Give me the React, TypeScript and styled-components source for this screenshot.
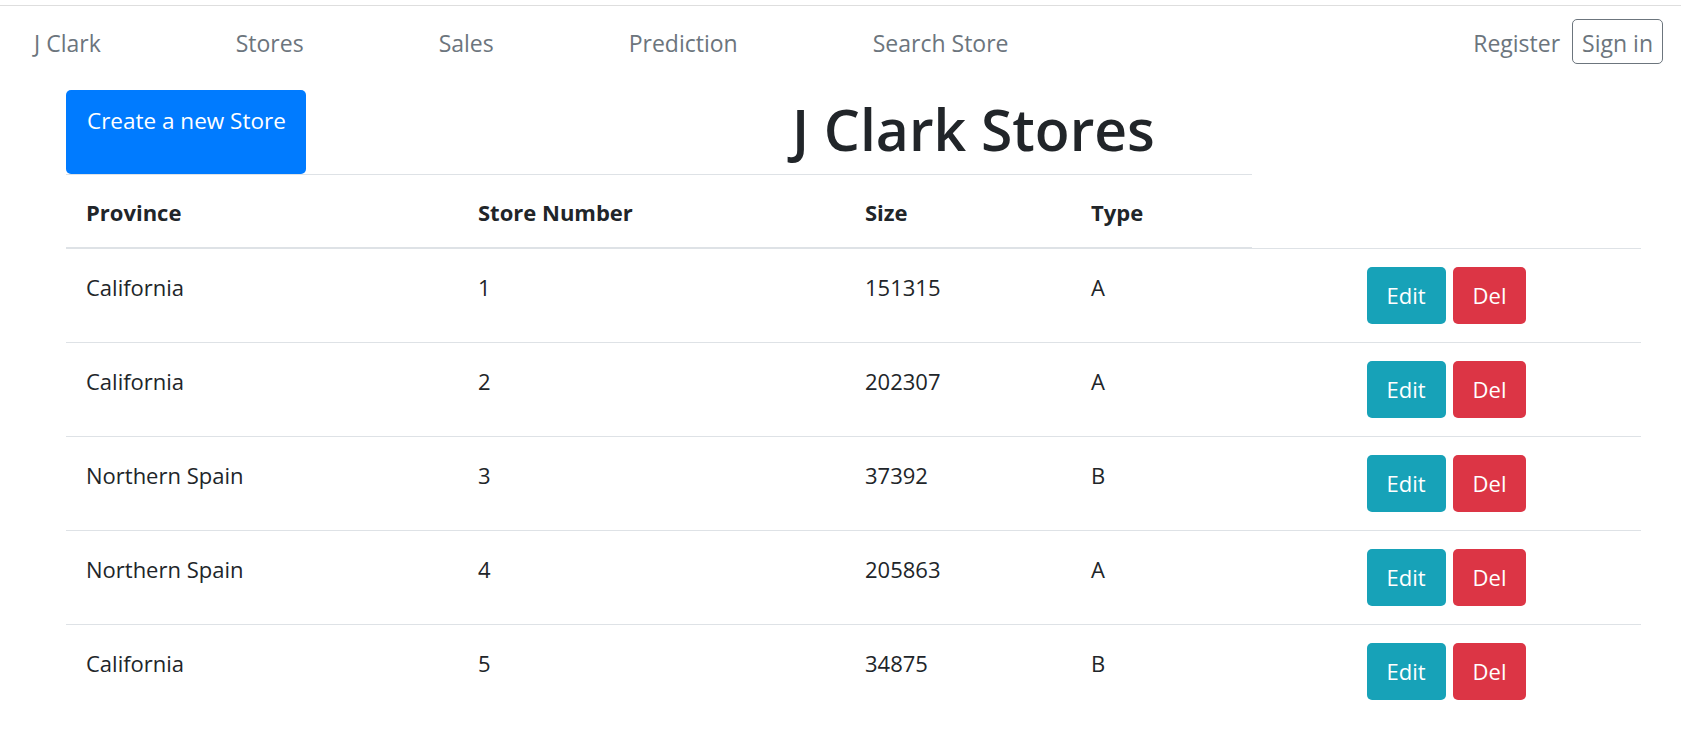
import React from 'react';
import styled, { createGlobalStyle } from 'styled-components';

const GlobalStyle = createGlobalStyle`
  body {
    margin: 0;
    padding-top: 5px;
    background: #fff;
    font-family: "Open Sans", "Noto Sans", sans-serif;
    color: #212529;
  }
  * {
    box-sizing: border-box;
  }
`;

const NavBar = styled.nav`
  display: flex;
  align-items: baseline;
  border-top: 1px solid #dedede;
  padding: 13px 18px 0 34px;
`;

const NavLinks = styled.div`
  display: flex;
  align-items: baseline;
  gap: 135px;
`;

const NavLink = styled.a`
  font-size: 23px;
  line-height: 33px;
  color: #6c757d;
  text-decoration: none;
  cursor: pointer;
`;

const NavRight = styled.div`
  display: flex;
  align-items: baseline;
  gap: 12px;
  margin-left: auto;
`;

const SignInButton = styled.button`
  font-family: inherit;
  font-size: 23px;
  line-height: 33px;
  padding: 7px 9px 3px;
  color: #6c757d;
  background: transparent;
  border: 1px solid #6c757d;
  border-radius: 5px;
  cursor: pointer;
`;

const Main = styled.main`
  padding: 26px 40px 0 66px;
`;

const HeaderRow = styled.div`
  display: flex;
  align-items: flex-start;
`;

const CreateButton = styled.button`
  font-family: inherit;
  font-size: 22.5px;
  line-height: 33px;
  height: 84px;
  padding: 14px 20px 0 21px;
  display: flex;
  align-items: flex-start;
  color: #fff;
  background: #007bff;
  border: none;
  border-radius: 5px;
  cursor: pointer;
`;

const Title = styled.h1`
  flex: 1;
  margin: 0;
  text-align: center;
  font-size: 57px;
  font-weight: 600;
  line-height: 78px;
  color: #212529;
`;

const Table = styled.table`
  width: 100%;
  table-layout: fixed;
  border-collapse: collapse;
`;

const Col = styled.col<{ $w: number }>`
  width: ${p => p.$w}px;
`;

const HeadCell = styled.th`
  text-align: left;
  font-size: 22px;
  line-height: 33px;
  font-weight: 700;
  padding: 21px 20px 18px;
  border-top: 1px solid #dee2e6;
  border-bottom: 2px solid #dee2e6;
`;

const Cell = styled.td<{ $actions?: boolean }>`
  font-size: 22px;
  line-height: 33px;
  vertical-align: top;
  border-top: 1px solid #dee2e6;
  padding: ${p => (p.$actions ? '18px 20px' : '22px 20px 18px')};
  text-align: ${p => (p.$actions ? 'center' : 'left')};
`;

const ButtonGroup = styled.div`
  display: inline-flex;
  gap: 7px;
`;

const ActionButton = styled.button<{ $variant: 'info' | 'danger' }>`
  font-family: inherit;
  font-size: 22px;
  height: 57px;
  padding: 0 20px;
  color: #fff;
  background: ${p => (p.$variant === 'info' ? '#17a2b8' : '#dc3545')};
  border: none;
  border-radius: 5px;
  cursor: pointer;
`;

const stores = [
  { province: 'California', number: 1, size: 151315, type: 'A' },
  { province: 'California', number: 2, size: 202307, type: 'A' },
  { province: 'Northern Spain', number: 3, size: 37392, type: 'B' },
  { province: 'Northern Spain', number: 4, size: 205863, type: 'A' },
  { province: 'California', number: 5, size: 34875, type: 'B' },
];

function App() {
  return (
    <>
      <GlobalStyle />
      <NavBar>
        <NavLinks>
          <NavLink>J Clark</NavLink>
          <NavLink>Stores</NavLink>
          <NavLink>Sales</NavLink>
          <NavLink>Prediction</NavLink>
          <NavLink>Search Store</NavLink>
        </NavLinks>
        <NavRight>
          <NavLink>Register</NavLink>
          <SignInButton>Sign in</SignInButton>
        </NavRight>
      </NavBar>

      <Main>
        <HeaderRow>
          <CreateButton>Create a new Store</CreateButton>
          <Title>J Clark Stores</Title>
        </HeaderRow>

        <Table>
          <colgroup>
            <Col $w={392} />
            <Col $w={387} />
            <Col $w={226} />
            <Col $w={181} />
            <Col $w={389} />
          </colgroup>
          <thead>
            <tr>
              <HeadCell>Province</HeadCell>
              <HeadCell>Store Number</HeadCell>
              <HeadCell>Size</HeadCell>
              <HeadCell>Type</HeadCell>
            </tr>
          </thead>
          <tbody>
            {stores.map(s => (
              <tr key={s.number}>
                <Cell>{s.province}</Cell>
                <Cell>{s.number}</Cell>
                <Cell>{s.size}</Cell>
                <Cell>{s.type}</Cell>
                <Cell $actions>
                  <ButtonGroup>
                    <ActionButton $variant="info">Edit</ActionButton>
                    <ActionButton $variant="danger">Del</ActionButton>
                  </ButtonGroup>
                </Cell>
              </tr>
            ))}
          </tbody>
        </Table>
      </Main>
    </>
  );
}

export default App;
